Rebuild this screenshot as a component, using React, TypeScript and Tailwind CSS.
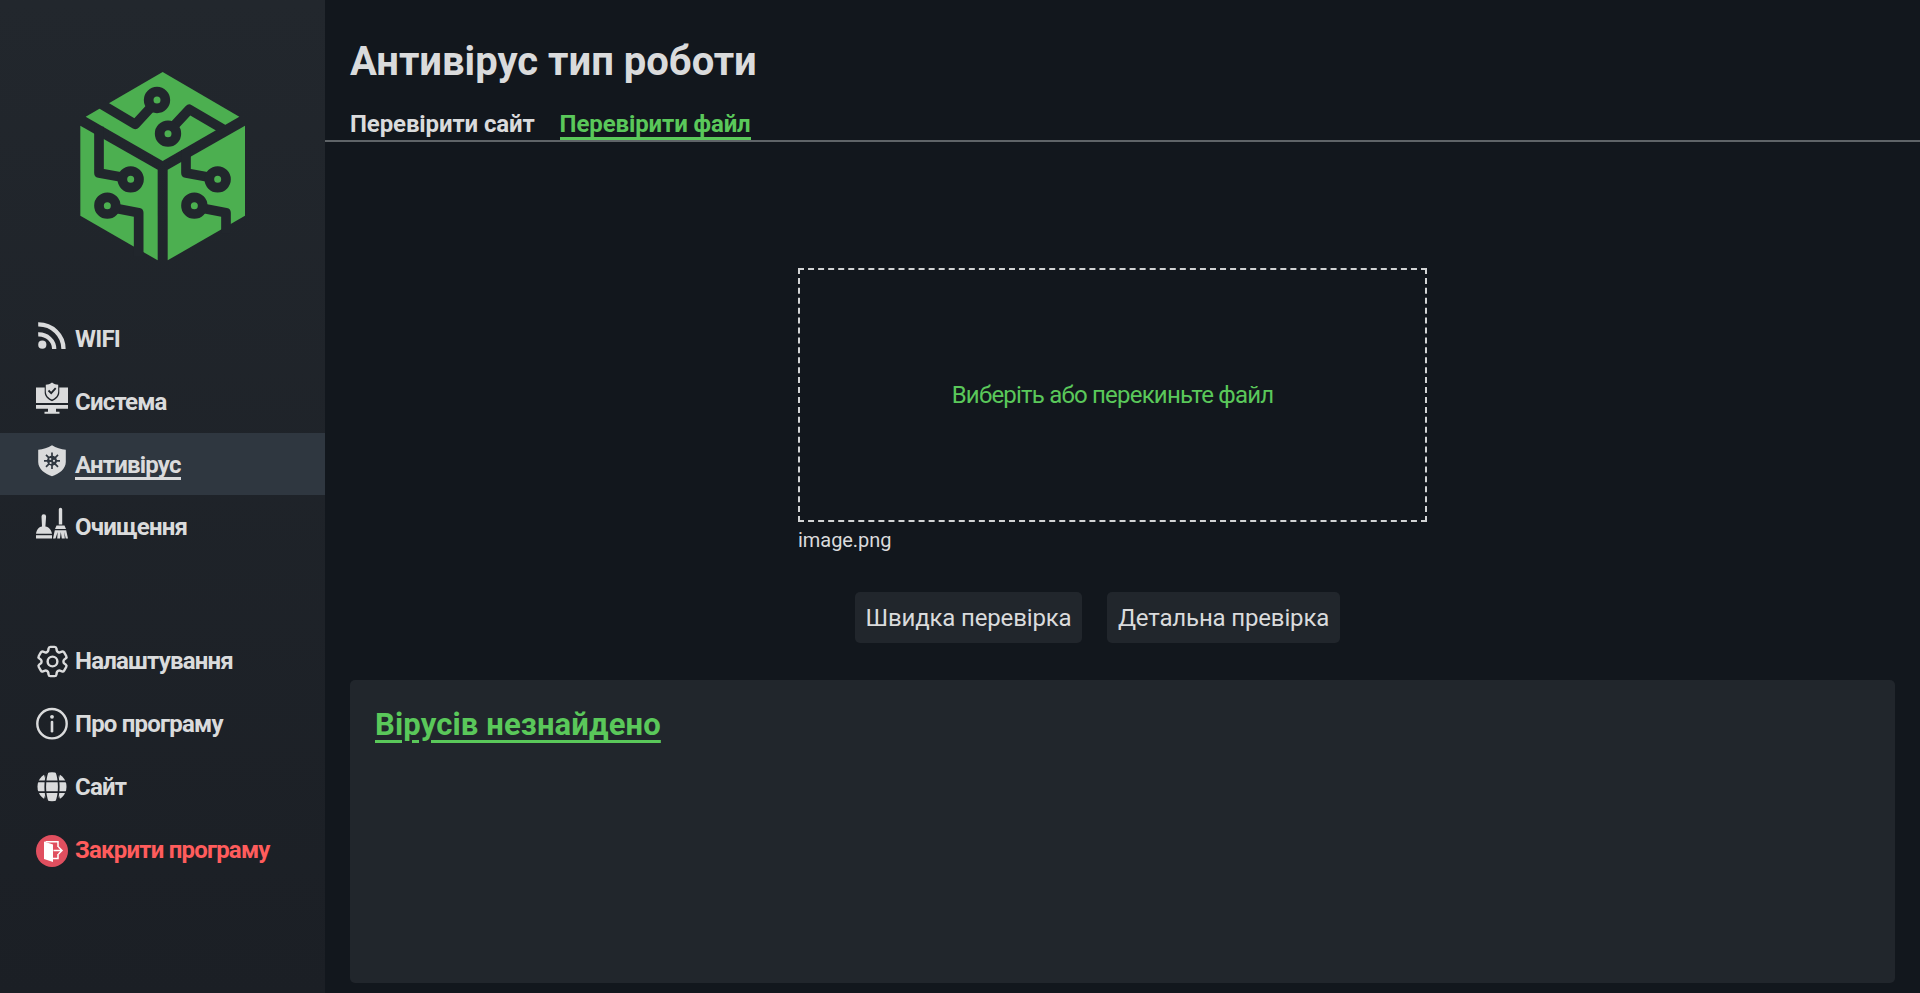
import React from "react";
import { HiOutlineCog6Tooth } from "react-icons/hi2";

const INK = "#dadbdc";

function Logo() {
  return (
    <svg className="block h-[189px] w-[165px]" viewBox="60 36 495 567">
      <g fill="#4caf50">
        <path d="M308 36 538 170 308 303 77 170Z" />
        <path d="M61 197 293 329V601L61 467Z" />
        <path d="M555 197 323 329V601L555 467Z" />
      </g>
      <g fill="none" stroke="#21262c" strokeWidth="29" strokeLinejoin="round">
        <path d="M125 133 226 193 282 132" />
        <path d="M332 208 388 148 492 209" />
        <path d="M117 200V339L200 354" />
        <path d="M378 270V339L460 354" />
        <path d="M150 442 236 458V590" />
        <path d="M412 442 498 458V520" />
      </g>
      <g fill="#4caf50" stroke="#21262c" strokeWidth="29">
        <circle cx="291" cy="120" r="25" />
        <circle cx="324" cy="221" r="25" />
        <circle cx="212" cy="358" r="25" />
        <circle cx="473" cy="358" r="25" />
        <circle cx="142" cy="437" r="25" />
        <circle cx="403" cy="437" r="25" />
      </g>
    </svg>
  );
}

function Icon({ children }: { children: React.ReactNode }) {
  return (
    <svg className="block h-8 w-8 shrink-0 overflow-visible" viewBox="0 0 32 32" fill={INK}>
      {children}
    </svg>
  );
}

const WifiIcon = () => (
  <Icon>
    <circle cx="6.3" cy="25.700" r="4.100" />
    <g fill="none" stroke={INK} strokeWidth="4.300">
      <path d="M2.200 15.400A15.400 14.600 0 0 1 18.200 30" />
      <path d="M2.200 5.400A25 24.600 0 0 1 27.500 30" />
    </g>
  </Icon>
);

const SystemIcon = () => (
  <Icon>
    <path d="M0 5.500H8.700V10.500C8.700 14.500 12 17.500 16 19.200 20 17.500 23.300 14.500 23.300 10.500V5.500H32V21H0Z" />
    <path d="M0 23H32V26.800H20V29.700H23.500V31.700H8.500V29.700H12V26.800H0Z" />
    <path d="M16 0.500C18 2 20 2.600 22.200 2.800V9C22.200 13.500 19.500 16 16 17.500 12.500 16 9.800 13.500 9.800 9V2.800C12 2.600 14 2 16 0.500Z" />
    <path d="m12.500 8.500 2.700 2.700 4.500-5" fill="none" stroke="#21262c" strokeWidth="1.800" />
  </Icon>
);

const ShieldIcon = () => (
  <Icon>
    <path d="M16 0.300C20 3 25 4.300 29.800 4.800V17C29.800 24 23 29 16 31.300 9 29 2.200 24 2.200 17V4.800C7 4.300 12 3 16 0.300Z" />
    <g stroke="#2f3740" strokeWidth="1.700" fill="none">
      <path d="M16 7.500V24M8 15.800H24M10 9.800 22 21.800M22 9.800 10 21.800" />
    </g>
    <circle cx="16" cy="15.800" r="5" fill="#2f3740" />
    <circle cx="14.300" cy="14" r="1.100" />
    <circle cx="18" cy="15.800" r="1.100" />
    <circle cx="14.600" cy="18" r="1.100" />
  </Icon>
);

const BroomIcon = () => (
  <Icon>
    <path d="M5.500 9.500a2.300 2.300 0 0 1 4.600 0L9.400 19.500C13 20 15.500 23 16 26.800H0C.5 23 2.500 20 6 19.500Z" />
    <path d="M0 28.200H16V31.500H0Z" />
    <path d="M22.800 2.500a1.700 1.700 0 0 1 3.400 0V17.500H22.800Z" />
    <path d="M20.500 18.500H28.500L30 22H19Z" />
    <path d="M18.800 23.200H30.200L32 31.500H29.700L28.300 25 28.800 31.500H25.800L24.800 25 24 31.500H21.200L21.700 25 19.500 31.500H17Z" />
  </Icon>
);

const GearIcon = () => (
  <span className="flex h-8 w-8 shrink-0 items-center justify-center">
    <HiOutlineCog6Tooth className="size-[39px] shrink-0" color={INK} />
  </span>
);

const InfoIcon = () => (
  <Icon>
    <circle cx="16" cy="15.700" r="14.700" fill="none" stroke={INK} strokeWidth="2.400" />
    <circle cx="16" cy="8.800" r="1.900" />
    <path d="M16 14V23.300" stroke={INK} strokeWidth="2.600" strokeLinecap="round" />
  </Icon>
);

const GlobeIcon = () => (
  <Icon>
    <circle cx="16" cy="15.800" r="14.500" />
    <g fill="none" stroke="#1e2228" strokeWidth="1.700">
      <path d="M0 10.300H32M0 21.200H32" />
      <path d="M12 0C8.300 9 8.300 22.600 12 31.600M20 0C23.700 9 23.700 22.600 20 31.600" />
    </g>
    <path d="M11.500 0 9 7 7 0ZM20.500 0 23 7 25 0ZM11.500 31.600 9 24.600 7 31.600ZM20.500 31.600 23 24.600 25 31.600Z" fill="#1e2228" />
  </Icon>
);

const ExitIcon = () => (
  <Icon>
    <circle cx="16" cy="17" r="16" fill="#e04f5f" />
    <path d="M8 7.500 17 10.500V28L8 25Z" fill="#fff" />
    <path d="M9.500 7.800H22V13M22 20V24.500H17M17.500 16.500H25.500M22.500 13 26 16.500 22.500 20" fill="none" stroke="#fff" strokeWidth="1.500" />
  </Icon>
);

type Item = { label: string; icon: () => React.ReactElement; active?: boolean; danger?: boolean };

const primary: Item[] = [
  { label: "WIFI", icon: WifiIcon },
  { label: "Система", icon: SystemIcon },
  { label: "Антивірус", icon: ShieldIcon, active: true },
  { label: "Очищення", icon: BroomIcon },
];

const secondary: Item[] = [
  { label: "Налаштування", icon: GearIcon },
  { label: "Про програму", icon: InfoIcon },
  { label: "Сайт", icon: GlobeIcon },
  { label: "Закрити програму", icon: ExitIcon, danger: true },
];

function NavItem({ label, icon: Glyph, active, danger, raised }: Item & { raised?: boolean }) {
  return (
    <a
      className={`flex h-[62.8px] items-start pt-3 pl-9 ${active ? "bg-[#2f3740]" : ""} ${danger ? "text-[#ff5c5c]" : ""}`}
    >
      <Glyph />
      <span
        className={`ml-[7px] h-[30px] border-b-3 text-2xl leading-[30px] font-bold tracking-[-0.8px] ${raised ? "mt-px" : "mt-[5px]"} ${active ? "border-[#dadbdc]" : "border-transparent"}`}
      >
        {label}
      </span>
    </a>
  );
}

export default function App() {
  return (
    <div className="flex h-[993px] w-full overflow-hidden bg-[#12171d] font-['Roboto',sans-serif] text-[#dadbdc]">
      <aside className="flex w-[325px] shrink-0 flex-col bg-linear-to-b from-[#22272d] to-[#1b1f25]">
        <div className="flex justify-center pt-[72px]">
          <Logo />
        </div>
        <nav className="mt-[46px]">
          {primary.map((item) => (
            <NavItem key={item.label} {...item} />
          ))}
        </nav>
        <nav className="mt-[75px]">
          {secondary.map((item) => (
            <NavItem key={item.label} {...item} raised />
          ))}
        </nav>
      </aside>

      <main className="flex min-w-0 flex-1 flex-col">
        <h1 className="mt-[37px] ml-[25px] text-[40px] leading-[50px] font-bold">Антивірус тип роботи</h1>
        <div className="mt-[21px] flex h-[34px] gap-[25px] border-b-2 border-[#5f6468] pl-[25px] text-2xl leading-[32px] font-bold tracking-[-0.12px]">
          <span className="h-8">Перевірити сайт</span>
          <span className="h-8 border-b-3 border-[#5ac85a] text-[#5ac85a]">Перевірити файл</span>
        </div>

        <div className="mt-[126px] flex flex-col items-center">
          <div className="-ml-[20px] w-[629px]">
            <div className="flex h-[254px] items-center justify-center border-2 border-dashed border-[#d2d4d5] text-2xl tracking-[-0.79px] text-[#5ac85a]">
              Виберіть або перекиньте файл
            </div>
            <p className="mt-[6px] text-xl leading-6 tracking-[-0.05px]">image.png</p>
          </div>
          <div className="mt-10 -ml-[50px] flex gap-[25px]">
            <button className="h-[51px] w-[227px] rounded-[5px] bg-[#21262c] text-2xl tracking-[-0.16px]">
              Швидка перевірка
            </button>
            <button className="h-[51px] w-[233px] rounded-[5px] bg-[#21262c] text-2xl tracking-[-0.16px]">
              Детальна превірка
            </button>
          </div>
        </div>

        <section className="mr-[25px] ml-[25px] mt-[37px] h-[303px] rounded-[5px] bg-[#21262c] px-[25px] pt-[25px]">
          <h2 className="text-[31px] leading-[39px] font-bold tracking-[0.13px] text-[#5ac85a] underline decoration-3 underline-offset-[5px]">
            Вірусів незнайдено
          </h2>
        </section>
      </main>
    </div>
  );
}
